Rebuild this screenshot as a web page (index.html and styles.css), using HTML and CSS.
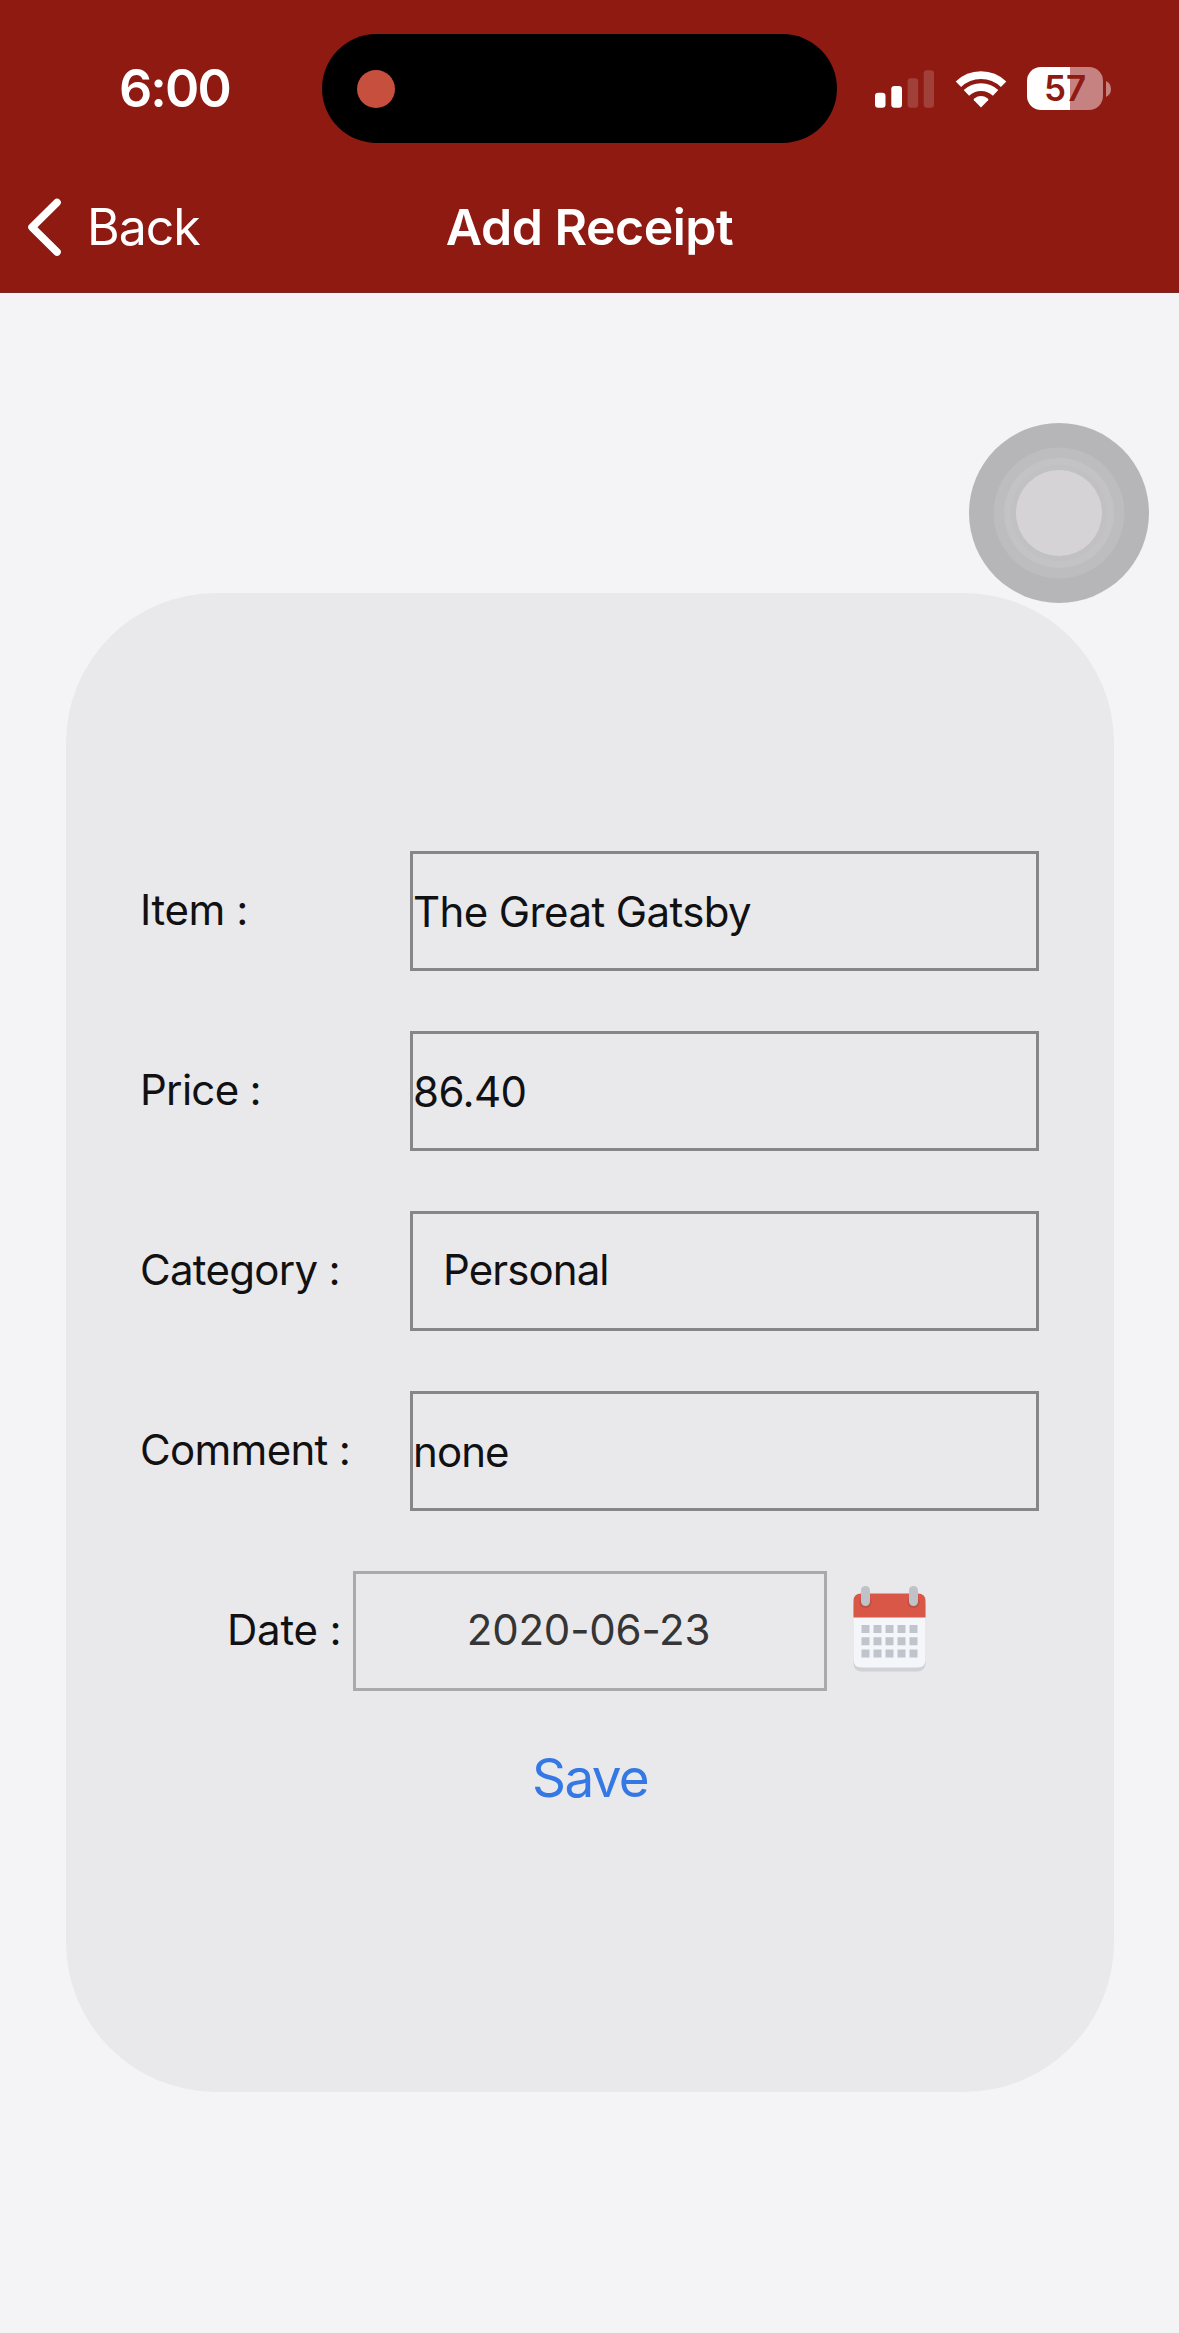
FILE: index.html
```
<!DOCTYPE html>
<html lang="en">
<head>
<meta charset="utf-8">
<title>Add Receipt</title>
<link rel="stylesheet" href="styles.css">
</head>
<body>
<header class="header">
  <div class="status-bar">
    <div class="time">6:00</div>
    <div class="island"><span class="recording-dot"></span></div>
    <div class="indicators">
      <svg class="signal" width="59" height="38" viewBox="0 0 59 38" fill="#fff">
        <rect x="0" y="22.7" width="10.5" height="15" rx="3.2"/>
        <rect x="16.3" y="16" width="10.7" height="21.7" rx="3.2"/>
        <rect x="32.6" y="8.3" width="10.6" height="29.4" rx="3.2" opacity=".17"/>
        <rect x="48.7" y="0.3" width="10.3" height="37.4" rx="3.2" opacity=".17"/>
      </svg>
      <svg class="wifi" width="52" height="38" viewBox="0 0 52 38">
        <g fill="none" stroke="#fff" stroke-width="7.8">
          <path d="M3.400 14.200A32.600 32.600 0 0 1 48.600 14.200"/>
          <path d="M11.400 22.900A21.200 21.200 0 0 1 40.600 22.900"/>
        </g>
        <path d="M26 37.600L18.900 30.300Q18.200 29.300 19.200 28.500A11.800 11.800 0 0 1 32.800 28.500Q33.800 29.300 33.100 30.300Z" fill="#fff"/>
      </svg>
      <div class="battery">
        <span class="battery-level">57</span>
        <svg class="battery-cap" width="5" height="16" viewBox="0 0 5 16"><path d="M0 0Q5 2.600 5 8T0 16Z" fill="#c68181"/></svg>
      </div>
    </div>
  </div>
  <nav class="nav-bar">
    <div class="back">
      <svg width="35" height="60" viewBox="0 0 35 60" fill="none" stroke="#fff" stroke-width="7.600" stroke-linecap="round" stroke-linejoin="round"><path d="M30 5.500L5 30.200L30 55"/></svg>
      <span class="back-label">Back</span>
    </div>
    <h1 class="title">Add Receipt</h1>
  </nav>
</header>
<main class="screen">
  <form class="card">
    <div class="row">
      <label class="label label-item">Item :</label>
      <div class="field">The Great Gatsby</div>
    </div>
    <div class="row">
      <label class="label">Price :</label>
      <div class="field">86.40</div>
    </div>
    <div class="row">
      <label class="label">Category :</label>
      <div class="field field-picker">Personal</div>
    </div>
    <div class="row">
      <label class="label">Comment :</label>
      <div class="field field-short">none</div>
    </div>
    <div class="date-row">
      <label class="label label-date">Date :</label>
      <div class="date-field">2020-06-23</div>
      <svg class="calendar" width="76" height="88" viewBox="0 0 76 88">
        <rect x="1.500" y="12" width="72" height="74.500" rx="8" fill="#cfd2d6"/>
        <path d="M1.500 30H73.500V74.500Q73.500 82.500 65.500 82.500H9.500Q1.500 82.500 1.500 74.500Z" fill="#f4f6f9"/>
        <path d="M1.500 32.500V16Q1.500 8.500 9 8.500H66Q73.500 8.500 73.500 16V32.500Z" fill="#d95747"/>
        <g fill="#c04f41"><circle cx="13.500" cy="17" r="6"/><circle cx="61.500" cy="17" r="6"/></g>
        <g fill="#bfc2c8"><rect x="9" y="1" width="9" height="20" rx="4.500"/><rect x="57" y="1" width="9" height="20" rx="4.500"/></g>
        <g fill="#c0c4cc">
          <path d="M9.500 40h8v8h-8zM21.500 40h8v8h-8zM33.500 40h8v8h-8zM45.500 40h8v8h-8zM57.500 40h8v8h-8z"/>
          <path d="M9.500 52.200h8v8h-8zM21.500 52.200h8v8h-8zM33.500 52.200h8v8h-8zM45.500 52.200h8v8h-8zM57.500 52.200h8v8h-8z"/>
          <path d="M9.500 64.400h8v8h-8zM21.500 64.400h8v8h-8zM33.500 64.400h8v8h-8zM45.500 64.400h8v8h-8zM57.500 64.400h8v8h-8z"/>
        </g>
      </svg>
    </div>
    <div class="save">Save</div>
  </form>
</main>
<div class="assistive-touch">
  <svg width="180" height="180" viewBox="0 0 180 180">
    <circle cx="90" cy="90" r="90" fill="#b6b5b8"/>
    <circle cx="90" cy="90" r="65.500" fill="#bdbcbf"/>
    <circle cx="90" cy="90" r="55" fill="#c3c2c5"/>
    <circle cx="90" cy="90" r="48" fill="#c1c0c3"/>
    <circle cx="90" cy="90" r="43" fill="#d5d3d6"/>
  </svg>
</div>
</body>
</html>
```
FILE: styles.css
```
* {
  box-sizing: border-box;
}

body {
  margin: 0;
  min-height: 2333px;
  background: #f4f4f6;
  color: #111113;
  font-family: Inter, "Liberation Sans", sans-serif;
  font-size: 42px;
  position: relative;
}

svg {
  display: block;
  flex: none;
}

.header {
  height: 293px;
  background: #8e1a12;
  border-bottom: 1px solid #7a2a24;
  color: #fff;
}

.status-bar {
  height: 177px;
  display: grid;
  grid-template-columns: 322px 515px 1fr;
  align-items: center;
}

.time {
  padding: 0 0 1px 119px;
  font-size: 52px;
  font-weight: 600;
  letter-spacing: -1.9px;
}

.island {
  height: 109px;
  border-radius: 55px;
  background: #000;
  display: flex;
  align-items: center;
  padding-left: 35px;
}

.recording-dot {
  width: 38px;
  height: 38px;
  border-radius: 50%;
  background: #c64f3e;
}

.indicators {
  display: flex;
  align-items: center;
  padding-left: 38px;
}

.wifi {
  margin-left: 21px;
}

.battery {
  display: flex;
  align-items: center;
  gap: 3px;
  margin-left: 20px;
}

.battery-level {
  width: 76px;
  height: 43px;
  border-radius: 14px;
  background: linear-gradient(90deg, #fff 57%, #c68181 57%);
  color: #8e1a12;
  font-size: 35px;
  font-weight: 600;
  line-height: 43px;
  text-align: center;
}

.nav-bar {
  height: 100px;
  display: grid;
  grid-template-columns: 1fr auto 1fr;
  align-items: center;
}

.back {
  display: flex;
  align-items: center;
  gap: 25px;
  padding-left: 27px;
}

.back-label {
  font-size: 50px;
  letter-spacing: -1px;
}

.title {
  margin: 0;
  font-size: 50px;
  font-weight: 600;
  letter-spacing: -0.5px;
}

.screen {
  padding: 300px 65px 0 66px;
}

.card {
  height: 1499px;
  border-radius: 150px;
  background: #e9e9eb;
  padding: 258px 75px 0 0;
  display: flex;
  flex-direction: column;
  gap: 60px;
}

.row {
  display: grid;
  grid-template-columns: 270px 1fr;
  align-items: center;
  padding-left: 74px;
}

.label {
  padding-bottom: 3px;
  letter-spacing: -0.7px;
}

.label-item {
  letter-spacing: -0.4px;
}

.label-date {
  width: 126px;
  letter-spacing: -0.2px;
}

.field,
.date-field {
  height: 120px;
  border: 3px solid #868688;
  display: flex;
  align-items: center;
  letter-spacing: -0.6px;
}

.field-picker {
  padding: 0 0 3px 30px;
  letter-spacing: -0.9px;
}

.field-short {
  letter-spacing: -0.9px;
}

.date-row {
  display: flex;
  align-items: center;
  padding-left: 161px;
}

.date-field {
  width: 474px;
  border-color: #aaaaac;
  color: #353537;
  justify-content: center;
  padding: 0 3px 3px 0;
  letter-spacing: -0.2px;
}

.calendar {
  margin: 0 0 4px 25px;
}

.save {
  margin: -5px -75px 0 0;
  color: #3478e5;
  font-size: 53px;
  line-height: 64px;
  letter-spacing: -1.7px;
  text-align: center;
}

.assistive-touch {
  position: absolute;
  left: 969px;
  top: 423px;
}
```
